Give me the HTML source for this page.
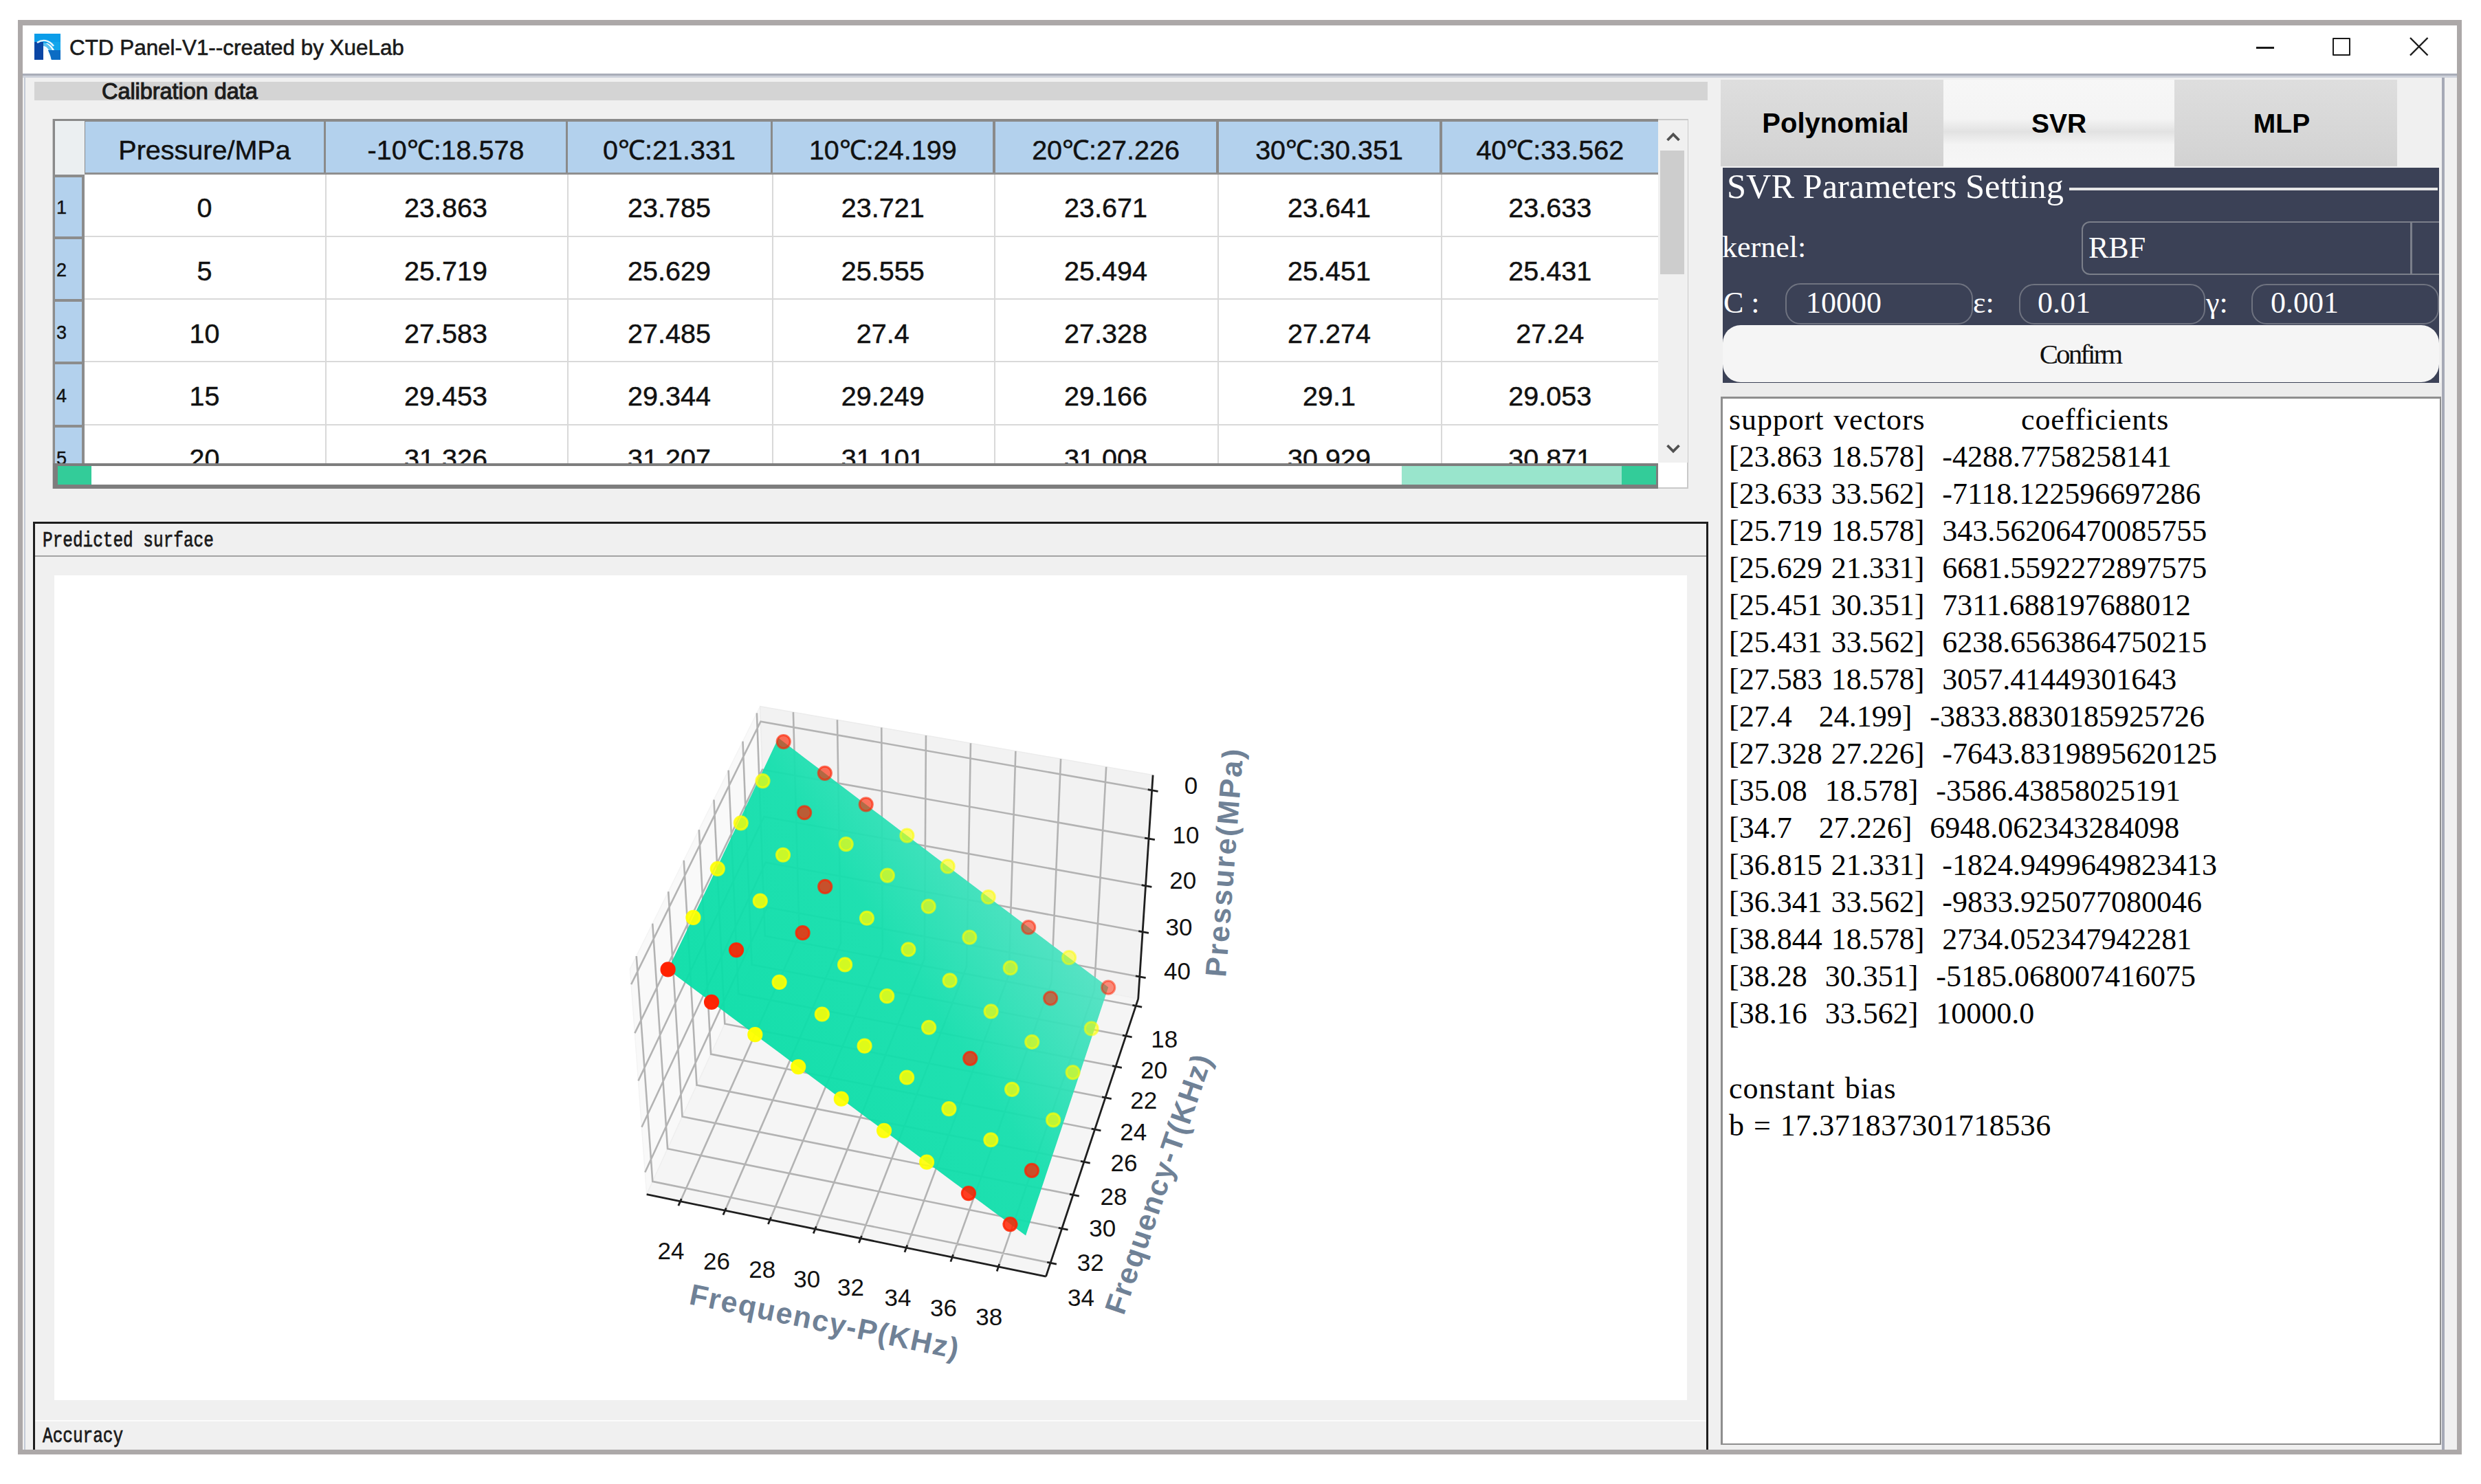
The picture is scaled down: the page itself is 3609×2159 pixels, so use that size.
<!DOCTYPE html><html><head><meta charset="utf-8"><title>CTD Panel</title><style>html,body{margin:0;padding:0;width:3609px;height:2159px;overflow:hidden;background:#fff;position:relative}div{box-sizing:border-box}</style></head><body>
<div style="position:absolute;left:26px;top:29px;width:3555px;height:2087px;background:#aca8a8;border-radius:3px"></div>
<div style="position:absolute;left:33px;top:37px;width:3541px;height:2072px;background:#f0f0f0"></div>
<div style="position:absolute;left:33px;top:37px;width:3541px;height:70px;background:#fff"></div>
<div style="position:absolute;left:33px;top:107px;width:3541px;height:3px;background:#a9adb8"></div>
<div style="position:absolute;left:33px;top:110px;width:3541px;height:3px;background:#cdd1da"></div>
<svg style="position:absolute;left:49px;top:48px" width="40" height="40" viewBox="0 0 40 40"><rect x="1" y="1" width="38" height="14" fill="#0b9de9"/><path d="M14 13 C22 14 27 19 30 25 L39 25 L39 13 Z" fill="#12a6ec"/><rect x="1" y="13" width="13" height="26" fill="#0a46a5"/><path d="M14 14 C19 15 24 18 27 25 L22 25 C20 21 17 19 14 19 Z" fill="#5cc3f0"/><path d="M21 25 L39 25 L39 39 L26 39 C23 35 21.5 31 21 25 Z" fill="#0b6cc4"/><path d="M5 14 C13 9 22 10 29 19" stroke="#e6f5fd" stroke-width="2.6" fill="none"/><path d="M14 22 C18 22 21 26 24 38" stroke="#f4fbff" stroke-width="3" fill="none"/></svg>
<div style="left:101px;position:absolute;top:52.07px;font-family:'Liberation Sans', sans-serif;font-size:31.4px;line-height:1.1171875em;font-weight:400;color:#1a1a1a;white-space:pre;-webkit-text-stroke:0.6px #1a1a1a">CTD Panel-V1--created by XueLab</div>
<div style="position:absolute;left:3282px;top:68px;width:26px;height:2.5px;background:#1a1a1a"></div>
<div style="position:absolute;left:3393px;top:55px;width:26px;height:26px;border:2.6px solid #1a1a1a;border-radius:1px"></div>
<svg style="position:absolute;left:3500px;top:49px" width="38" height="38" viewBox="0 0 38 38"><path d="M6 6 L31.5 31.5 M31.5 6 L6 31.5" stroke="#1a1a1a" stroke-width="2.4"/></svg>
<div style="position:absolute;left:35px;top:113px;width:2px;height:1996px;background:#c3cad6"></div>
<div style="position:absolute;left:50px;top:119px;width:2434px;height:27px;background:#d4d4d4"></div>
<div style="left:148px;position:absolute;top:115.17px;font-family:'Liberation Sans', sans-serif;font-size:32.4px;line-height:1.1171875em;font-weight:400;color:#1c1c1c;white-space:pre;-webkit-text-stroke:1.1px #1c1c1c">Calibration data</div>
<div style="position:absolute;left:76px;top:173px;width:2380px;height:538px;background:#fff;border:2px solid #c9c9c9"></div>
<div style="position:absolute;left:77px;top:173px;width:2335px;height:501px;overflow:hidden">
<div style="position:absolute;left:0;top:0;width:2335px;height:81px;background:#8a8a8a"></div>
<div style="position:absolute;left:3px;top:3px;width:43px;height:78px;background:#ebeff1"></div>
<div style="position:absolute;left:47.0px;top:4px;width:346.5px;height:77px;background:#b3d1ed"></div>
<div style="position:absolute;left:397.0px;top:4px;width:348.5px;height:77px;background:#b3d1ed"></div>
<div style="position:absolute;left:749.0px;top:4px;width:294.5px;height:77px;background:#b3d1ed"></div>
<div style="position:absolute;left:1047.0px;top:4px;width:320.0px;height:77px;background:#b3d1ed"></div>
<div style="position:absolute;left:1370.5px;top:4px;width:321.5px;height:77px;background:#b3d1ed"></div>
<div style="position:absolute;left:1695.5px;top:4px;width:321.5px;height:77px;background:#b3d1ed"></div>
<div style="position:absolute;left:2020.5px;top:4px;width:314.5px;height:77px;background:#b3d1ed"></div>
<div style="position:absolute;left:46px;top:78px;width:2289px;height:3px;background:#8f8f8f"></div>
<div style="position:absolute;left:0;top:81px;width:46px;height:90px;background:#8c8c8c"></div>
<div style="position:absolute;left:3px;top:84.5px;width:39px;height:86.5px;background:#b3d1ed"></div>
<div style="position:absolute;left:46px;top:170px;width:2289px;height:2px;background:#d9d9d9"></div>
<div style="position:absolute;left:0;top:171px;width:46px;height:91px;background:#8c8c8c"></div>
<div style="position:absolute;left:3px;top:174.5px;width:39px;height:87.5px;background:#b3d1ed"></div>
<div style="position:absolute;left:46px;top:261px;width:2289px;height:2px;background:#d9d9d9"></div>
<div style="position:absolute;left:0;top:262px;width:46px;height:91px;background:#8c8c8c"></div>
<div style="position:absolute;left:3px;top:265.5px;width:39px;height:87.5px;background:#b3d1ed"></div>
<div style="position:absolute;left:46px;top:352px;width:2289px;height:2px;background:#d9d9d9"></div>
<div style="position:absolute;left:0;top:353px;width:46px;height:92px;background:#8c8c8c"></div>
<div style="position:absolute;left:3px;top:356.5px;width:39px;height:88.5px;background:#b3d1ed"></div>
<div style="position:absolute;left:46px;top:444px;width:2289px;height:2px;background:#d9d9d9"></div>
<div style="position:absolute;left:0;top:445px;width:46px;height:91px;background:#8c8c8c"></div>
<div style="position:absolute;left:3px;top:448.5px;width:39px;height:87.5px;background:#b3d1ed"></div>
<div style="position:absolute;left:46px;top:535px;width:2289px;height:2px;background:#d9d9d9"></div>
<div style="position:absolute;left:395.5px;top:81px;width:2px;height:420px;background:#d9d9d9"></div>
<div style="position:absolute;left:747.5px;top:81px;width:2px;height:420px;background:#d9d9d9"></div>
<div style="position:absolute;left:1045.5px;top:81px;width:2px;height:420px;background:#d9d9d9"></div>
<div style="position:absolute;left:1369.0px;top:81px;width:2px;height:420px;background:#d9d9d9"></div>
<div style="position:absolute;left:1694.0px;top:81px;width:2px;height:420px;background:#d9d9d9"></div>
<div style="position:absolute;left:2019.0px;top:81px;width:2px;height:420px;background:#d9d9d9"></div>
</div>
<div style="left:97.50px;width:400px;text-align:center;position:absolute;top:196.24px;font-family:'Liberation Sans', sans-serif;font-size:39.5px;line-height:1.1171875em;font-weight:400;color:#111;white-space:pre;-webkit-text-stroke:0.5px #111">Pressure/MPa</div>
<div style="left:448.50px;width:400px;text-align:center;position:absolute;top:196.24px;font-family:'Liberation Sans', sans-serif;font-size:39.5px;line-height:1.1171875em;font-weight:400;color:#111;white-space:pre;-webkit-text-stroke:0.5px #111">-10℃:18.578</div>
<div style="left:773.50px;width:400px;text-align:center;position:absolute;top:196.24px;font-family:'Liberation Sans', sans-serif;font-size:39.5px;line-height:1.1171875em;font-weight:400;color:#111;white-space:pre;-webkit-text-stroke:0.5px #111">0℃:21.331</div>
<div style="left:1084.25px;width:400px;text-align:center;position:absolute;top:196.24px;font-family:'Liberation Sans', sans-serif;font-size:39.5px;line-height:1.1171875em;font-weight:400;color:#111;white-space:pre;-webkit-text-stroke:0.5px #111">10℃:24.199</div>
<div style="left:1408.50px;width:400px;text-align:center;position:absolute;top:196.24px;font-family:'Liberation Sans', sans-serif;font-size:39.5px;line-height:1.1171875em;font-weight:400;color:#111;white-space:pre;-webkit-text-stroke:0.5px #111">20℃:27.226</div>
<div style="left:1733.50px;width:400px;text-align:center;position:absolute;top:196.24px;font-family:'Liberation Sans', sans-serif;font-size:39.5px;line-height:1.1171875em;font-weight:400;color:#111;white-space:pre;-webkit-text-stroke:0.5px #111">30℃:30.351</div>
<div style="left:2054.75px;width:400px;text-align:center;position:absolute;top:196.24px;font-family:'Liberation Sans', sans-serif;font-size:39.5px;line-height:1.1171875em;font-weight:400;color:#111;white-space:pre;-webkit-text-stroke:0.5px #111">40℃:33.562</div>
<div style="position:absolute;left:77px;top:254px;width:2335px;height:420px;overflow:hidden">
<div style="left:20.50px;width:400px;text-align:center;position:absolute;top:26.49px;font-family:'Liberation Sans', sans-serif;font-size:39.5px;line-height:1.1171875em;font-weight:400;color:#111;white-space:pre;-webkit-text-stroke:0.5px #111">0</div>
<div style="left:371.50px;width:400px;text-align:center;position:absolute;top:26.49px;font-family:'Liberation Sans', sans-serif;font-size:39.5px;line-height:1.1171875em;font-weight:400;color:#111;white-space:pre;-webkit-text-stroke:0.5px #111">23.863</div>
<div style="left:696.50px;width:400px;text-align:center;position:absolute;top:26.49px;font-family:'Liberation Sans', sans-serif;font-size:39.5px;line-height:1.1171875em;font-weight:400;color:#111;white-space:pre;-webkit-text-stroke:0.5px #111">23.785</div>
<div style="left:1007.25px;width:400px;text-align:center;position:absolute;top:26.49px;font-family:'Liberation Sans', sans-serif;font-size:39.5px;line-height:1.1171875em;font-weight:400;color:#111;white-space:pre;-webkit-text-stroke:0.5px #111">23.721</div>
<div style="left:1331.50px;width:400px;text-align:center;position:absolute;top:26.49px;font-family:'Liberation Sans', sans-serif;font-size:39.5px;line-height:1.1171875em;font-weight:400;color:#111;white-space:pre;-webkit-text-stroke:0.5px #111">23.671</div>
<div style="left:1656.50px;width:400px;text-align:center;position:absolute;top:26.49px;font-family:'Liberation Sans', sans-serif;font-size:39.5px;line-height:1.1171875em;font-weight:400;color:#111;white-space:pre;-webkit-text-stroke:0.5px #111">23.641</div>
<div style="left:1977.75px;width:400px;text-align:center;position:absolute;top:26.49px;font-family:'Liberation Sans', sans-serif;font-size:39.5px;line-height:1.1171875em;font-weight:400;color:#111;white-space:pre;-webkit-text-stroke:0.5px #111">23.633</div>
<div style="left:5px;position:absolute;top:32.81px;font-family:'Liberation Sans', sans-serif;font-size:27px;line-height:1.1171875em;font-weight:400;color:#111;white-space:pre;-webkit-text-stroke:0.4px #111">1</div>
<div style="left:20.50px;width:400px;text-align:center;position:absolute;top:117.74px;font-family:'Liberation Sans', sans-serif;font-size:39.5px;line-height:1.1171875em;font-weight:400;color:#111;white-space:pre;-webkit-text-stroke:0.5px #111">5</div>
<div style="left:371.50px;width:400px;text-align:center;position:absolute;top:117.74px;font-family:'Liberation Sans', sans-serif;font-size:39.5px;line-height:1.1171875em;font-weight:400;color:#111;white-space:pre;-webkit-text-stroke:0.5px #111">25.719</div>
<div style="left:696.50px;width:400px;text-align:center;position:absolute;top:117.74px;font-family:'Liberation Sans', sans-serif;font-size:39.5px;line-height:1.1171875em;font-weight:400;color:#111;white-space:pre;-webkit-text-stroke:0.5px #111">25.629</div>
<div style="left:1007.25px;width:400px;text-align:center;position:absolute;top:117.74px;font-family:'Liberation Sans', sans-serif;font-size:39.5px;line-height:1.1171875em;font-weight:400;color:#111;white-space:pre;-webkit-text-stroke:0.5px #111">25.555</div>
<div style="left:1331.50px;width:400px;text-align:center;position:absolute;top:117.74px;font-family:'Liberation Sans', sans-serif;font-size:39.5px;line-height:1.1171875em;font-weight:400;color:#111;white-space:pre;-webkit-text-stroke:0.5px #111">25.494</div>
<div style="left:1656.50px;width:400px;text-align:center;position:absolute;top:117.74px;font-family:'Liberation Sans', sans-serif;font-size:39.5px;line-height:1.1171875em;font-weight:400;color:#111;white-space:pre;-webkit-text-stroke:0.5px #111">25.451</div>
<div style="left:1977.75px;width:400px;text-align:center;position:absolute;top:117.74px;font-family:'Liberation Sans', sans-serif;font-size:39.5px;line-height:1.1171875em;font-weight:400;color:#111;white-space:pre;-webkit-text-stroke:0.5px #111">25.431</div>
<div style="left:5px;position:absolute;top:124.06px;font-family:'Liberation Sans', sans-serif;font-size:27px;line-height:1.1171875em;font-weight:400;color:#111;white-space:pre;-webkit-text-stroke:0.4px #111">2</div>
<div style="left:20.50px;width:400px;text-align:center;position:absolute;top:208.99px;font-family:'Liberation Sans', sans-serif;font-size:39.5px;line-height:1.1171875em;font-weight:400;color:#111;white-space:pre;-webkit-text-stroke:0.5px #111">10</div>
<div style="left:371.50px;width:400px;text-align:center;position:absolute;top:208.99px;font-family:'Liberation Sans', sans-serif;font-size:39.5px;line-height:1.1171875em;font-weight:400;color:#111;white-space:pre;-webkit-text-stroke:0.5px #111">27.583</div>
<div style="left:696.50px;width:400px;text-align:center;position:absolute;top:208.99px;font-family:'Liberation Sans', sans-serif;font-size:39.5px;line-height:1.1171875em;font-weight:400;color:#111;white-space:pre;-webkit-text-stroke:0.5px #111">27.485</div>
<div style="left:1007.25px;width:400px;text-align:center;position:absolute;top:208.99px;font-family:'Liberation Sans', sans-serif;font-size:39.5px;line-height:1.1171875em;font-weight:400;color:#111;white-space:pre;-webkit-text-stroke:0.5px #111">27.4</div>
<div style="left:1331.50px;width:400px;text-align:center;position:absolute;top:208.99px;font-family:'Liberation Sans', sans-serif;font-size:39.5px;line-height:1.1171875em;font-weight:400;color:#111;white-space:pre;-webkit-text-stroke:0.5px #111">27.328</div>
<div style="left:1656.50px;width:400px;text-align:center;position:absolute;top:208.99px;font-family:'Liberation Sans', sans-serif;font-size:39.5px;line-height:1.1171875em;font-weight:400;color:#111;white-space:pre;-webkit-text-stroke:0.5px #111">27.274</div>
<div style="left:1977.75px;width:400px;text-align:center;position:absolute;top:208.99px;font-family:'Liberation Sans', sans-serif;font-size:39.5px;line-height:1.1171875em;font-weight:400;color:#111;white-space:pre;-webkit-text-stroke:0.5px #111">27.24</div>
<div style="left:5px;position:absolute;top:215.31px;font-family:'Liberation Sans', sans-serif;font-size:27px;line-height:1.1171875em;font-weight:400;color:#111;white-space:pre;-webkit-text-stroke:0.4px #111">3</div>
<div style="left:20.50px;width:400px;text-align:center;position:absolute;top:300.24px;font-family:'Liberation Sans', sans-serif;font-size:39.5px;line-height:1.1171875em;font-weight:400;color:#111;white-space:pre;-webkit-text-stroke:0.5px #111">15</div>
<div style="left:371.50px;width:400px;text-align:center;position:absolute;top:300.24px;font-family:'Liberation Sans', sans-serif;font-size:39.5px;line-height:1.1171875em;font-weight:400;color:#111;white-space:pre;-webkit-text-stroke:0.5px #111">29.453</div>
<div style="left:696.50px;width:400px;text-align:center;position:absolute;top:300.24px;font-family:'Liberation Sans', sans-serif;font-size:39.5px;line-height:1.1171875em;font-weight:400;color:#111;white-space:pre;-webkit-text-stroke:0.5px #111">29.344</div>
<div style="left:1007.25px;width:400px;text-align:center;position:absolute;top:300.24px;font-family:'Liberation Sans', sans-serif;font-size:39.5px;line-height:1.1171875em;font-weight:400;color:#111;white-space:pre;-webkit-text-stroke:0.5px #111">29.249</div>
<div style="left:1331.50px;width:400px;text-align:center;position:absolute;top:300.24px;font-family:'Liberation Sans', sans-serif;font-size:39.5px;line-height:1.1171875em;font-weight:400;color:#111;white-space:pre;-webkit-text-stroke:0.5px #111">29.166</div>
<div style="left:1656.50px;width:400px;text-align:center;position:absolute;top:300.24px;font-family:'Liberation Sans', sans-serif;font-size:39.5px;line-height:1.1171875em;font-weight:400;color:#111;white-space:pre;-webkit-text-stroke:0.5px #111">29.1</div>
<div style="left:1977.75px;width:400px;text-align:center;position:absolute;top:300.24px;font-family:'Liberation Sans', sans-serif;font-size:39.5px;line-height:1.1171875em;font-weight:400;color:#111;white-space:pre;-webkit-text-stroke:0.5px #111">29.053</div>
<div style="left:5px;position:absolute;top:306.56px;font-family:'Liberation Sans', sans-serif;font-size:27px;line-height:1.1171875em;font-weight:400;color:#111;white-space:pre;-webkit-text-stroke:0.4px #111">4</div>
<div style="left:20.50px;width:400px;text-align:center;position:absolute;top:391.49px;font-family:'Liberation Sans', sans-serif;font-size:39.5px;line-height:1.1171875em;font-weight:400;color:#111;white-space:pre;-webkit-text-stroke:0.5px #111">20</div>
<div style="left:371.50px;width:400px;text-align:center;position:absolute;top:391.49px;font-family:'Liberation Sans', sans-serif;font-size:39.5px;line-height:1.1171875em;font-weight:400;color:#111;white-space:pre;-webkit-text-stroke:0.5px #111">31.326</div>
<div style="left:696.50px;width:400px;text-align:center;position:absolute;top:391.49px;font-family:'Liberation Sans', sans-serif;font-size:39.5px;line-height:1.1171875em;font-weight:400;color:#111;white-space:pre;-webkit-text-stroke:0.5px #111">31.207</div>
<div style="left:1007.25px;width:400px;text-align:center;position:absolute;top:391.49px;font-family:'Liberation Sans', sans-serif;font-size:39.5px;line-height:1.1171875em;font-weight:400;color:#111;white-space:pre;-webkit-text-stroke:0.5px #111">31.101</div>
<div style="left:1331.50px;width:400px;text-align:center;position:absolute;top:391.49px;font-family:'Liberation Sans', sans-serif;font-size:39.5px;line-height:1.1171875em;font-weight:400;color:#111;white-space:pre;-webkit-text-stroke:0.5px #111">31.008</div>
<div style="left:1656.50px;width:400px;text-align:center;position:absolute;top:391.49px;font-family:'Liberation Sans', sans-serif;font-size:39.5px;line-height:1.1171875em;font-weight:400;color:#111;white-space:pre;-webkit-text-stroke:0.5px #111">30.929</div>
<div style="left:1977.75px;width:400px;text-align:center;position:absolute;top:391.49px;font-family:'Liberation Sans', sans-serif;font-size:39.5px;line-height:1.1171875em;font-weight:400;color:#111;white-space:pre;-webkit-text-stroke:0.5px #111">30.871</div>
<div style="left:5px;position:absolute;top:397.81px;font-family:'Liberation Sans', sans-serif;font-size:27px;line-height:1.1171875em;font-weight:400;color:#111;white-space:pre;-webkit-text-stroke:0.4px #111">5</div>
</div>
<div style="position:absolute;left:77px;top:674px;width:2335px;height:37px;background:#7d7d7d"></div>
<div style="position:absolute;left:84px;top:678px;width:2325px;height:27px;background:#fff"></div>
<div style="position:absolute;left:84px;top:678px;width:49px;height:27px;background:#33cc99"></div>
<div style="position:absolute;left:2039px;top:678px;width:320px;height:27px;background:#99e5cc"></div>
<div style="position:absolute;left:2359px;top:678px;width:50px;height:27px;background:#33cc99"></div>
<div style="position:absolute;left:2412px;top:175px;width:43px;height:498px;background:#f0f0f0"></div>
<div style="position:absolute;left:2415px;top:219px;width:35px;height:180px;background:#cdcdcd"></div>
<svg style="position:absolute;left:2422px;top:190px" width="24" height="20" viewBox="0 0 24 20"><path d="M3.5 14 L12 5.5 L20.5 14" stroke="#505050" stroke-width="3.8" fill="none"/></svg>
<svg style="position:absolute;left:2422px;top:643px" width="24" height="20" viewBox="0 0 24 20"><path d="M3.5 5 L12 13.5 L20.5 5" stroke="#505050" stroke-width="3.8" fill="none"/></svg>
<div style="position:absolute;left:48px;top:759px;width:2437px;height:1354px;border:3px solid #1e1e1e;background:#f0f0f0"></div>
<div style="left:62px;position:absolute;top:775.69px;font-family:'Liberation Mono', monospace;font-size:24.4px;line-height:1.1328125em;font-weight:400;color:#1a1a1a;white-space:pre;transform:scaleY(1.25);transform-origin:0 80%;-webkit-text-stroke:0.6px #1a1a1a">Predicted surface</div>
<div style="position:absolute;left:51px;top:808px;width:2431px;height:2px;background:#a3a3a3"></div>
<div style="position:absolute;left:79px;top:837px;width:2375px;height:1200px;background:#fff"></div>
<div style="position:absolute;left:51px;top:2066px;width:2431px;height:2px;background:#fbfbfb"></div>
<div style="left:62px;position:absolute;top:2078.69px;font-family:'Liberation Mono', monospace;font-size:24.4px;line-height:1.1328125em;font-weight:400;color:#1a1a1a;white-space:pre;transform:scaleY(1.25);transform-origin:0 80%;-webkit-text-stroke:0.6px #1a1a1a">Accuracy</div>
<svg style="position:absolute;left:0;top:0" width="3609" height="2159" viewBox="0 0 3609 2159">
<defs><clipPath id="pc"><rect x="79" y="837" width="2375" height="1200"/></clipPath><linearGradient id="sg" gradientUnits="userSpaceOnUse" x1="1150" y1="1600" x2="1560" y2="1330"><stop offset="0" stop-color="#0adea8"/><stop offset="0.5" stop-color="#14dfad"/><stop offset="1" stop-color="#55e2c4"/></linearGradient></defs>
<g clip-path="url(#pc)">
<path d="M1117.24 1351.86 L940.68 1737.69 L916.49 1409.69 L1105.70 1027.73 Z" fill="#f9f9f9" stroke="#f4f4f4" stroke-width="1.5"/>
<path d="M1117.24 1351.86 L1655.71 1453.12 L1677.12 1127.60 L1105.70 1027.73 Z" fill="#f2f2f2" stroke="#ececec" stroke-width="1.5"/>
<path d="M1117.24 1351.86 L1655.71 1453.12 L1521.54 1857.04 L940.68 1737.69 Z" fill="#f5f5f5" stroke="#efefef" stroke-width="1.5"/>
<path d="M989.66 1747.76 L1162.73 1360.41 L1153.91 1036.15 M1054.70 1761.12 L1223.11 1371.77 L1217.92 1047.34 M1120.10 1774.55 L1283.78 1383.18 L1282.26 1058.59 M1185.84 1788.06 L1344.76 1394.64 L1346.95 1069.89 M1251.95 1801.65 L1406.05 1406.17 L1411.98 1081.26 M1318.41 1815.30 L1467.64 1417.75 L1477.36 1092.69 M1385.24 1829.03 L1529.54 1429.39 L1543.09 1104.17 M1452.43 1842.84 L1591.76 1441.09 L1609.17 1115.72 M1100.90 1037.42 L1112.74 1361.70 L1652.30 1463.41 M1080.49 1078.62 L1093.62 1403.49 L1637.79 1507.08 M1059.69 1120.62 L1074.14 1446.05 L1623.01 1551.59 M1038.47 1163.45 L1054.30 1489.41 L1607.94 1596.94 M1016.83 1207.14 L1034.09 1533.58 L1592.59 1643.17 M994.75 1251.71 L1013.49 1578.58 L1576.93 1690.29 M972.22 1297.18 L992.50 1624.45 L1560.97 1738.34 M949.23 1343.60 L971.10 1671.21 L1544.70 1787.33 M925.76 1390.98 L949.29 1718.88 L1528.09 1837.31 M1675.66 1149.75 L1106.48 1049.76 L918.14 1432.09 M1671.03 1220.13 L1108.98 1119.78 L923.39 1503.18 M1666.52 1288.76 L1111.41 1188.10 L928.49 1572.39 M1662.12 1355.70 L1113.78 1254.77 L933.46 1639.79 M1657.82 1421.02 L1116.10 1319.85 L938.30 1705.45" fill="none" stroke="#b3b3b3" stroke-width="2.6" stroke-linejoin="miter"/>
<path d="M940.68 1737.69 L1521.54 1857.04 M1521.54 1857.04 L1655.71 1453.12 M1655.71 1453.12 L1677.12 1127.60 M986.81 1754.15 L991.29 1744.10 M1051.93 1767.54 L1056.29 1757.45 M1117.40 1781.01 L1121.64 1770.86 M1183.22 1794.55 L1187.34 1784.35 M1249.41 1808.17 L1253.40 1797.92 M1315.95 1821.86 L1319.82 1811.56 M1382.86 1835.62 L1386.60 1825.27 M1450.14 1849.45 L1453.75 1839.06 M1661.14 1465.07 L1647.38 1462.48 M1646.63 1508.77 L1632.88 1506.15 M1631.84 1553.29 L1618.10 1550.65 M1616.78 1598.66 L1603.03 1595.99 M1601.42 1644.90 L1587.68 1642.20 M1585.76 1692.04 L1572.03 1689.32 M1569.80 1740.10 L1556.07 1737.35 M1553.52 1789.12 L1539.80 1786.34 M1536.91 1839.12 L1523.20 1836.31 M1684.52 1151.31 L1669.75 1148.71 M1679.89 1221.72 L1665.13 1219.08 M1675.38 1290.37 L1660.62 1287.69 M1670.97 1357.33 L1656.22 1354.62 M1666.67 1422.67 L1651.93 1419.92" fill="none" stroke="#1f1f1f" stroke-width="2.8"/>
<text x="976" y="1831.60" text-anchor="middle" font-family="Liberation Sans" font-size="35" fill="#111">24</text>
<text x="1042.5" y="1846.60" text-anchor="middle" font-family="Liberation Sans" font-size="35" fill="#111">26</text>
<text x="1108.75" y="1858.60" text-anchor="middle" font-family="Liberation Sans" font-size="35" fill="#111">28</text>
<text x="1173.75" y="1872.60" text-anchor="middle" font-family="Liberation Sans" font-size="35" fill="#111">30</text>
<text x="1237.5" y="1885.10" text-anchor="middle" font-family="Liberation Sans" font-size="35" fill="#111">32</text>
<text x="1306" y="1900.10" text-anchor="middle" font-family="Liberation Sans" font-size="35" fill="#111">34</text>
<text x="1372.5" y="1915.10" text-anchor="middle" font-family="Liberation Sans" font-size="35" fill="#111">36</text>
<text x="1438.75" y="1927.60" text-anchor="middle" font-family="Liberation Sans" font-size="35" fill="#111">38</text>
<text x="1693.75" y="1523.60" text-anchor="middle" font-family="Liberation Sans" font-size="35" fill="#111">18</text>
<text x="1678.75" y="1568.60" text-anchor="middle" font-family="Liberation Sans" font-size="35" fill="#111">20</text>
<text x="1663.75" y="1612.60" text-anchor="middle" font-family="Liberation Sans" font-size="35" fill="#111">22</text>
<text x="1648.75" y="1658.60" text-anchor="middle" font-family="Liberation Sans" font-size="35" fill="#111">24</text>
<text x="1635" y="1703.60" text-anchor="middle" font-family="Liberation Sans" font-size="35" fill="#111">26</text>
<text x="1620" y="1752.60" text-anchor="middle" font-family="Liberation Sans" font-size="35" fill="#111">28</text>
<text x="1603.75" y="1798.60" text-anchor="middle" font-family="Liberation Sans" font-size="35" fill="#111">30</text>
<text x="1586.25" y="1848.60" text-anchor="middle" font-family="Liberation Sans" font-size="35" fill="#111">32</text>
<text x="1572.5" y="1900.10" text-anchor="middle" font-family="Liberation Sans" font-size="35" fill="#111">34</text>
<text x="1732.5" y="1155.10" text-anchor="middle" font-family="Liberation Sans" font-size="35" fill="#111">0</text>
<text x="1725" y="1226.60" text-anchor="middle" font-family="Liberation Sans" font-size="35" fill="#111">10</text>
<text x="1720.75" y="1292.60" text-anchor="middle" font-family="Liberation Sans" font-size="35" fill="#111">20</text>
<text x="1715" y="1361.35" text-anchor="middle" font-family="Liberation Sans" font-size="35" fill="#111">30</text>
<text x="1712.5" y="1425.10" text-anchor="middle" font-family="Liberation Sans" font-size="35" fill="#111">40</text>
<text transform="translate(1200 1922.5) rotate(11.6)" x="0" y="15" text-anchor="middle" font-family="Liberation Sans" font-weight="700" font-size="43" letter-spacing="1.7" fill="#6f8196">Frequency-P(KHz)</text>
<text transform="translate(1685 1722) rotate(-71)" x="0" y="15" text-anchor="middle" font-family="Liberation Sans" font-weight="700" font-size="43" letter-spacing="1.7" fill="#6f8196">Frequency-T(KHz)</text>
<text transform="translate(1781 1254) rotate(-85.6)" x="0" y="15" text-anchor="middle" font-family="Liberation Sans" font-weight="700" font-size="43" letter-spacing="2.6" fill="#6f8196">Pressure(MPa)</text>
<path d="M1132.27 1073.52 L1144.95 1083.18 L1157.61 1092.81 L1170.24 1102.43 L1182.86 1112.03 L1195.46 1121.60 L1208.04 1131.16 L1220.59 1140.70 L1233.13 1150.22 L1245.65 1159.72 L1258.15 1169.21 L1270.62 1178.67 L1283.08 1188.11 L1295.52 1197.54 L1307.94 1206.95 L1320.34 1216.34 L1332.71 1225.71 L1345.07 1235.06 L1357.41 1244.39 L1369.74 1253.70 L1382.04 1263.00 L1394.32 1272.28 L1406.58 1281.54 L1418.83 1290.78 L1431.06 1300.00 L1443.26 1309.21 L1455.45 1318.40 L1467.62 1327.57 L1479.77 1336.72 L1491.90 1345.85 L1504.02 1354.97 L1516.11 1364.07 L1528.19 1373.15 L1540.25 1382.21 L1552.29 1391.26 L1564.31 1400.29 L1576.31 1409.30 L1588.30 1418.30 L1600.27 1427.27 L1612.22 1436.23 L1609.34 1444.97 L1606.45 1453.72 L1603.55 1462.51 L1600.64 1471.32 L1597.71 1480.16 L1594.78 1489.02 L1591.84 1497.91 L1588.89 1506.83 L1585.93 1515.77 L1582.96 1524.74 L1579.98 1533.74 L1576.99 1542.76 L1573.99 1551.81 L1570.98 1560.89 L1567.96 1570.00 L1564.93 1579.14 L1561.88 1588.30 L1558.83 1597.49 L1555.76 1606.71 L1552.69 1615.96 L1549.60 1625.24 L1546.50 1634.55 L1543.40 1643.88 L1540.28 1653.25 L1537.15 1662.65 L1534.01 1672.07 L1530.85 1681.53 L1527.69 1691.01 L1524.51 1700.53 L1521.33 1710.07 L1518.13 1719.65 L1514.92 1729.26 L1511.70 1738.90 L1508.46 1748.57 L1505.22 1758.27 L1501.96 1768.01 L1498.69 1777.77 L1495.41 1787.57 L1492.11 1797.40 L1479.21 1787.88 L1466.28 1778.33 L1453.32 1768.77 L1440.35 1759.19 L1427.35 1749.58 L1414.34 1739.96 L1401.29 1730.32 L1388.23 1720.65 L1375.15 1710.97 L1362.04 1701.27 L1348.91 1691.54 L1335.75 1681.79 L1322.57 1672.03 L1309.37 1662.24 L1296.15 1652.43 L1282.90 1642.60 L1269.64 1632.75 L1256.34 1622.88 L1243.03 1612.99 L1229.69 1603.08 L1216.32 1593.14 L1202.94 1583.18 L1189.52 1573.21 L1176.09 1563.21 L1162.63 1553.19 L1149.15 1543.14 L1135.64 1533.08 L1122.11 1522.99 L1108.55 1512.89 L1094.97 1502.76 L1081.37 1492.60 L1067.74 1482.43 L1054.09 1472.23 L1040.41 1462.01 L1026.70 1451.77 L1012.97 1441.51 L999.22 1431.22 L985.44 1420.91 L971.63 1410.58 L976.07 1401.38 L980.48 1392.22 L984.88 1383.09 L989.26 1373.99 L993.62 1364.92 L997.96 1355.88 L1002.29 1346.87 L1006.60 1337.89 L1010.89 1328.94 L1015.17 1320.03 L1019.43 1311.14 L1023.67 1302.28 L1027.89 1293.45 L1032.10 1284.65 L1036.30 1275.87 L1040.47 1267.13 L1044.63 1258.41 L1048.78 1249.73 L1052.90 1241.07 L1057.02 1232.44 L1061.11 1223.83 L1065.19 1215.26 L1069.26 1206.71 L1073.31 1198.19 L1077.34 1189.70 L1081.36 1181.23 L1085.37 1172.79 L1089.36 1164.37 L1093.33 1155.99 L1097.29 1147.62 L1101.23 1139.29 L1105.16 1130.98 L1109.08 1122.70 L1112.98 1114.44 L1116.87 1106.20 L1120.74 1098.00 L1124.60 1089.81 L1128.44 1081.65 L1132.27 1073.52 Z" fill="url(#sg)" fill-opacity="0.95"/>
<circle cx="1612.19" cy="1436.69" r="9.6" fill="#ff2200" fill-opacity="0.500" stroke="#ff2200" stroke-width="3" stroke-opacity="0.500"/>
<circle cx="1555.09" cy="1393.22" r="9.6" fill="#ffff00" fill-opacity="0.522" stroke="#ffff00" stroke-width="3" stroke-opacity="0.522"/>
<circle cx="1496.13" cy="1349.17" r="9.6" fill="#ff2200" fill-opacity="0.542" stroke="#ff2200" stroke-width="3" stroke-opacity="0.542"/>
<circle cx="1437.73" cy="1304.98" r="9.6" fill="#ffff00" fill-opacity="0.562" stroke="#ffff00" stroke-width="3" stroke-opacity="0.562"/>
<circle cx="1587.67" cy="1496.40" r="9.6" fill="#ffff00" fill-opacity="0.565" stroke="#ffff00" stroke-width="3" stroke-opacity="0.565"/>
<circle cx="1378.65" cy="1260.40" r="9.6" fill="#ffff00" fill-opacity="0.581" stroke="#ffff00" stroke-width="3" stroke-opacity="0.581"/>
<circle cx="1528.13" cy="1452.29" r="9.6" fill="#ff2200" fill-opacity="0.587" stroke="#ff2200" stroke-width="3" stroke-opacity="0.587"/>
<circle cx="1319.37" cy="1215.54" r="9.6" fill="#ffff00" fill-opacity="0.598" stroke="#ffff00" stroke-width="3" stroke-opacity="0.598"/>
<circle cx="1469.72" cy="1408.16" r="9.6" fill="#ffff00" fill-opacity="0.608" stroke="#ffff00" stroke-width="3" stroke-opacity="0.608"/>
<circle cx="1259.74" cy="1170.35" r="9.6" fill="#ff2200" fill-opacity="0.614" stroke="#ff2200" stroke-width="3" stroke-opacity="0.614"/>
<circle cx="1410.36" cy="1363.60" r="9.6" fill="#ffff00" fill-opacity="0.628" stroke="#ffff00" stroke-width="3" stroke-opacity="0.628"/>
<circle cx="1199.84" cy="1124.86" r="9.6" fill="#ff2200" fill-opacity="0.630" stroke="#ff2200" stroke-width="3" stroke-opacity="0.630"/>
<circle cx="1560.61" cy="1560.09" r="9.6" fill="#ffff00" fill-opacity="0.632" stroke="#ffff00" stroke-width="3" stroke-opacity="0.632"/>
<circle cx="1139.74" cy="1079.06" r="9.6" fill="#ff2200" fill-opacity="0.644" stroke="#ff2200" stroke-width="3" stroke-opacity="0.644"/>
<circle cx="1350.71" cy="1318.72" r="9.6" fill="#ffff00" fill-opacity="0.647" stroke="#ffff00" stroke-width="3" stroke-opacity="0.647"/>
<circle cx="1501.22" cy="1515.84" r="9.6" fill="#ffff00" fill-opacity="0.654" stroke="#ffff00" stroke-width="3" stroke-opacity="0.654"/>
<circle cx="1290.87" cy="1273.55" r="9.6" fill="#ffff00" fill-opacity="0.664" stroke="#ffff00" stroke-width="3" stroke-opacity="0.664"/>
<circle cx="1441.57" cy="1471.28" r="9.6" fill="#ffff00" fill-opacity="0.676" stroke="#ffff00" stroke-width="3" stroke-opacity="0.676"/>
<circle cx="1230.70" cy="1228.06" r="9.6" fill="#ffff00" fill-opacity="0.681" stroke="#ffff00" stroke-width="3" stroke-opacity="0.681"/>
<circle cx="1381.64" cy="1426.41" r="9.6" fill="#ffff00" fill-opacity="0.696" stroke="#ffff00" stroke-width="3" stroke-opacity="0.696"/>
<circle cx="1170.16" cy="1182.23" r="9.6" fill="#ff2200" fill-opacity="0.696" stroke="#ff2200" stroke-width="3" stroke-opacity="0.696"/>
<circle cx="1532.11" cy="1629.39" r="9.6" fill="#ffff00" fill-opacity="0.702" stroke="#ffff00" stroke-width="3" stroke-opacity="0.702"/>
<circle cx="1109.53" cy="1136.11" r="9.6" fill="#ffff00" fill-opacity="0.711" stroke="#ffff00" stroke-width="3" stroke-opacity="0.711"/>
<circle cx="1321.41" cy="1381.23" r="9.6" fill="#ffff00" fill-opacity="0.715" stroke="#ffff00" stroke-width="3" stroke-opacity="0.715"/>
<circle cx="1472.05" cy="1584.81" r="9.6" fill="#ffff00" fill-opacity="0.724" stroke="#ffff00" stroke-width="3" stroke-opacity="0.724"/>
<circle cx="1260.98" cy="1335.74" r="9.6" fill="#ffff00" fill-opacity="0.733" stroke="#ffff00" stroke-width="3" stroke-opacity="0.733"/>
<circle cx="1411.27" cy="1539.84" r="9.6" fill="#ff2200" fill-opacity="0.746" stroke="#ff2200" stroke-width="3" stroke-opacity="0.746"/>
<circle cx="1200.18" cy="1289.92" r="9.6" fill="#ff2200" fill-opacity="0.750" stroke="#ff2200" stroke-width="3" stroke-opacity="0.750"/>
<circle cx="1139.03" cy="1243.76" r="9.6" fill="#ffff00" fill-opacity="0.765" stroke="#ffff00" stroke-width="3" stroke-opacity="0.765"/>
<circle cx="1351.12" cy="1494.73" r="9.6" fill="#ffff00" fill-opacity="0.766" stroke="#ffff00" stroke-width="3" stroke-opacity="0.766"/>
<circle cx="1500.91" cy="1702.89" r="9.6" fill="#ff2200" fill-opacity="0.772" stroke="#ff2200" stroke-width="3" stroke-opacity="0.772"/>
<circle cx="1077.76" cy="1197.29" r="9.6" fill="#ffff00" fill-opacity="0.780" stroke="#ffff00" stroke-width="3" stroke-opacity="0.780"/>
<circle cx="1290.21" cy="1449.21" r="9.6" fill="#ffff00" fill-opacity="0.786" stroke="#ffff00" stroke-width="3" stroke-opacity="0.786"/>
<circle cx="1441.36" cy="1658.24" r="9.6" fill="#ffff00" fill-opacity="0.795" stroke="#ffff00" stroke-width="3" stroke-opacity="0.795"/>
<circle cx="1229.09" cy="1403.39" r="9.6" fill="#ffff00" fill-opacity="0.804" stroke="#ffff00" stroke-width="3" stroke-opacity="0.804"/>
<circle cx="1380.40" cy="1613.04" r="9.6" fill="#ffff00" fill-opacity="0.817" stroke="#ffff00" stroke-width="3" stroke-opacity="0.817"/>
<circle cx="1167.62" cy="1357.21" r="9.6" fill="#ff2200" fill-opacity="0.821" stroke="#ff2200" stroke-width="3" stroke-opacity="0.821"/>
<circle cx="1105.79" cy="1310.70" r="9.6" fill="#ffff00" fill-opacity="0.837" stroke="#ffff00" stroke-width="3" stroke-opacity="0.837"/>
<circle cx="1319.16" cy="1567.52" r="9.6" fill="#ffff00" fill-opacity="0.838" stroke="#ffff00" stroke-width="3" stroke-opacity="0.838"/>
<circle cx="1469.45" cy="1781.11" r="9.6" fill="#ff2200" fill-opacity="0.844" stroke="#ff2200" stroke-width="3" stroke-opacity="0.844"/>
<circle cx="1043.82" cy="1263.87" r="9.6" fill="#ffff00" fill-opacity="0.852" stroke="#ffff00" stroke-width="3" stroke-opacity="0.852"/>
<circle cx="1257.59" cy="1521.66" r="9.6" fill="#ffff00" fill-opacity="0.858" stroke="#ffff00" stroke-width="3" stroke-opacity="0.858"/>
<circle cx="1408.89" cy="1736.07" r="9.6" fill="#ff2200" fill-opacity="0.867" stroke="#ff2200" stroke-width="3" stroke-opacity="0.867"/>
<circle cx="1195.82" cy="1475.49" r="9.6" fill="#ffff00" fill-opacity="0.876" stroke="#ffff00" stroke-width="3" stroke-opacity="0.876"/>
<circle cx="1348.07" cy="1690.71" r="9.6" fill="#ffff00" fill-opacity="0.890" stroke="#ffff00" stroke-width="3" stroke-opacity="0.890"/>
<circle cx="1133.65" cy="1428.97" r="9.6" fill="#ffff00" fill-opacity="0.894" stroke="#ffff00" stroke-width="3" stroke-opacity="0.894"/>
<circle cx="1071.07" cy="1382.08" r="9.6" fill="#ff2200" fill-opacity="0.910" stroke="#ff2200" stroke-width="3" stroke-opacity="0.910"/>
<circle cx="1286.08" cy="1644.85" r="9.6" fill="#ffff00" fill-opacity="0.911" stroke="#ffff00" stroke-width="3" stroke-opacity="0.911"/>
<circle cx="1008.41" cy="1334.89" r="9.6" fill="#ffff00" fill-opacity="0.926" stroke="#ffff00" stroke-width="3" stroke-opacity="0.926"/>
<circle cx="1223.78" cy="1598.64" r="9.6" fill="#ffff00" fill-opacity="0.931" stroke="#ffff00" stroke-width="3" stroke-opacity="0.931"/>
<circle cx="1161.24" cy="1552.11" r="9.6" fill="#ffff00" fill-opacity="0.950" stroke="#ffff00" stroke-width="3" stroke-opacity="0.950"/>
<circle cx="1098.34" cy="1505.22" r="9.6" fill="#ffff00" fill-opacity="0.968" stroke="#ffff00" stroke-width="3" stroke-opacity="0.968"/>
<circle cx="1035.06" cy="1457.97" r="9.6" fill="#ff2200" fill-opacity="0.984" stroke="#ff2200" stroke-width="3" stroke-opacity="0.984"/>
<circle cx="971.62" cy="1410.40" r="9.6" fill="#ff2200" fill-opacity="1.000" stroke="#ff2200" stroke-width="3" stroke-opacity="1.000"/>
</g></svg>
<div style="position:absolute;left:3552px;top:113px;width:4px;height:1996px;background:#a6a9b6"></div>
<div style="position:absolute;left:2503px;top:116px;width:324px;height:126px;background:linear-gradient(#dedede,#d2d2d2)"></div>
<div style="position:absolute;left:2827px;top:116px;width:336px;height:126px;background:linear-gradient(#f7f7f7 0%,#f4f4f4 45%,#e2e2e2 60%,#f4f4f4 75%,#f6f6f6 100%)"></div>
<div style="position:absolute;left:3163px;top:116px;width:324px;height:126px;background:linear-gradient(#dedede,#d2d2d2)"></div>
<div style="left:2470.00px;width:400px;text-align:center;position:absolute;top:156.79px;font-family:'Liberation Sans', sans-serif;font-size:40px;line-height:1.1171875em;font-weight:700;color:#000;white-space:pre;">Polynomial</div>
<div style="left:2795.00px;width:400px;text-align:center;position:absolute;top:157.69px;font-family:'Liberation Sans', sans-serif;font-size:39px;line-height:1.1171875em;font-weight:700;color:#000;white-space:pre;">SVR</div>
<div style="left:3119.00px;width:400px;text-align:center;position:absolute;top:157.69px;font-family:'Liberation Sans', sans-serif;font-size:39px;line-height:1.1171875em;font-weight:700;color:#000;white-space:pre;">MLP</div>
<div style="position:absolute;left:0;top:0;width:3548px;height:2159px;overflow:hidden">
<div style="position:absolute;left:2506px;top:244px;width:1042px;height:313px;background:#3b4156"></div>
<div style="left:2512px;position:absolute;top:244.09px;font-family:'Liberation Serif', serif;font-size:50.4px;line-height:1.107421875em;font-weight:400;color:#fff;white-space:pre;">SVR Parameters Setting</div>
<div style="position:absolute;left:3010px;top:273px;width:536px;height:3.5px;background:#e6e6e6"></div>
<div style="left:2505px;position:absolute;top:335.79px;font-family:'Liberation Serif', serif;font-size:44px;line-height:1.107421875em;font-weight:400;color:#fff;white-space:pre;">kernel:</div>
<div style="position:absolute;left:3028px;top:322px;width:532px;height:78px;border:2.5px solid #7b7f8a;border-radius:12px"></div>
<div style="position:absolute;left:3506px;top:323px;width:2.5px;height:76px;background:#7b7f8a"></div>
<div style="left:3038px;position:absolute;top:336.79px;font-family:'Liberation Serif', serif;font-size:44px;line-height:1.107421875em;font-weight:400;color:#fff;white-space:pre;">RBF</div>
<div style="left:2507px;position:absolute;top:416.79px;font-family:'Liberation Serif', serif;font-size:44px;line-height:1.107421875em;font-weight:400;color:#fff;white-space:pre;">C :</div>
<div style="position:absolute;left:2597px;top:412px;width:273px;height:60px;border:2.5px solid #6f7380;border-radius:22px"></div>
<div style="left:2627px;position:absolute;top:416.79px;font-family:'Liberation Serif', serif;font-size:44px;line-height:1.107421875em;font-weight:400;color:#fff;white-space:pre;">10000</div>
<div style="left:2870px;position:absolute;top:416.79px;font-family:'Liberation Serif', serif;font-size:44px;line-height:1.107421875em;font-weight:400;color:#fff;white-space:pre;">ε:</div>
<div style="position:absolute;left:2937px;top:413px;width:271px;height:59px;border:2.5px solid #6f7380;border-radius:22px"></div>
<div style="left:2964px;position:absolute;top:416.79px;font-family:'Liberation Serif', serif;font-size:44px;line-height:1.107421875em;font-weight:400;color:#fff;white-space:pre;">0.01</div>
<div style="left:3209px;position:absolute;top:416.79px;font-family:'Liberation Serif', serif;font-size:44px;line-height:1.107421875em;font-weight:400;color:#fff;white-space:pre;">γ:</div>
<div style="position:absolute;left:3275px;top:413px;width:273px;height:59px;border:2.5px solid #6f7380;border-radius:22px"></div>
<div style="left:3303px;position:absolute;top:416.79px;font-family:'Liberation Serif', serif;font-size:44px;line-height:1.107421875em;font-weight:400;color:#fff;white-space:pre;">0.001</div>
</div>
<div style="position:absolute;left:2506px;top:473px;width:1042px;height:83px;background:#f5f5f5;border-radius:26px"></div>
<div style="left:2826.00px;width:400px;text-align:center;position:absolute;top:493.46px;font-family:'Liberation Serif', serif;font-size:41px;line-height:1.107421875em;font-weight:400;color:#111;white-space:pre;letter-spacing:-2.9px">Confirm</div>
<div style="position:absolute;left:2503px;top:557px;width:1048px;height:20px;background:#ececec"></div>
<div style="position:absolute;left:2503px;top:577px;width:1048px;height:1525px;background:#fff;border:3px solid #8e8e8e;border-right-width:2.5px;border-bottom-width:2.5px"></div>
<div style="left:2515px;position:absolute;top:586.79px;font-family:'Liberation Serif', serif;font-size:44px;line-height:1.107421875em;font-weight:400;color:#000;white-space:pre;letter-spacing:0.9px;word-spacing:2px">support vectors</div>
<div style="left:2940px;position:absolute;top:586.79px;font-family:'Liberation Serif', serif;font-size:44px;line-height:1.107421875em;font-weight:400;color:#000;white-space:pre;letter-spacing:0.9px">coefficients</div>
<div style="left:2515px;position:absolute;top:640.83px;font-family:'Liberation Serif', serif;font-size:44px;line-height:1.107421875em;font-weight:400;color:#000;white-space:pre;word-spacing:2px">[23.863 18.578]  -4288.7758258141</div>
<div style="left:2515px;position:absolute;top:694.87px;font-family:'Liberation Serif', serif;font-size:44px;line-height:1.107421875em;font-weight:400;color:#000;white-space:pre;word-spacing:2px">[23.633 33.562]  -7118.122596697286</div>
<div style="left:2515px;position:absolute;top:748.91px;font-family:'Liberation Serif', serif;font-size:44px;line-height:1.107421875em;font-weight:400;color:#000;white-space:pre;word-spacing:2px">[25.719 18.578]  343.56206470085755</div>
<div style="left:2515px;position:absolute;top:802.95px;font-family:'Liberation Serif', serif;font-size:44px;line-height:1.107421875em;font-weight:400;color:#000;white-space:pre;word-spacing:2px">[25.629 21.331]  6681.5592272897575</div>
<div style="left:2515px;position:absolute;top:856.99px;font-family:'Liberation Serif', serif;font-size:44px;line-height:1.107421875em;font-weight:400;color:#000;white-space:pre;word-spacing:2px">[25.451 30.351]  7311.688197688012</div>
<div style="left:2515px;position:absolute;top:911.03px;font-family:'Liberation Serif', serif;font-size:44px;line-height:1.107421875em;font-weight:400;color:#000;white-space:pre;word-spacing:2px">[25.431 33.562]  6238.6563864750215</div>
<div style="left:2515px;position:absolute;top:965.07px;font-family:'Liberation Serif', serif;font-size:44px;line-height:1.107421875em;font-weight:400;color:#000;white-space:pre;word-spacing:2px">[27.583 18.578]  3057.41449301643</div>
<div style="left:2515px;position:absolute;top:1019.11px;font-family:'Liberation Serif', serif;font-size:44px;line-height:1.107421875em;font-weight:400;color:#000;white-space:pre;word-spacing:2px">[27.4   24.199]  -3833.8830185925726</div>
<div style="left:2515px;position:absolute;top:1073.15px;font-family:'Liberation Serif', serif;font-size:44px;line-height:1.107421875em;font-weight:400;color:#000;white-space:pre;word-spacing:2px">[27.328 27.226]  -7643.8319895620125</div>
<div style="left:2515px;position:absolute;top:1127.19px;font-family:'Liberation Serif', serif;font-size:44px;line-height:1.107421875em;font-weight:400;color:#000;white-space:pre;word-spacing:2px">[35.08  18.578]  -3586.43858025191</div>
<div style="left:2515px;position:absolute;top:1181.23px;font-family:'Liberation Serif', serif;font-size:44px;line-height:1.107421875em;font-weight:400;color:#000;white-space:pre;word-spacing:2px">[34.7   27.226]  6948.062343284098</div>
<div style="left:2515px;position:absolute;top:1235.27px;font-family:'Liberation Serif', serif;font-size:44px;line-height:1.107421875em;font-weight:400;color:#000;white-space:pre;word-spacing:2px">[36.815 21.331]  -1824.9499649823413</div>
<div style="left:2515px;position:absolute;top:1289.31px;font-family:'Liberation Serif', serif;font-size:44px;line-height:1.107421875em;font-weight:400;color:#000;white-space:pre;word-spacing:2px">[36.341 33.562]  -9833.925077080046</div>
<div style="left:2515px;position:absolute;top:1343.35px;font-family:'Liberation Serif', serif;font-size:44px;line-height:1.107421875em;font-weight:400;color:#000;white-space:pre;word-spacing:2px">[38.844 18.578]  2734.052347942281</div>
<div style="left:2515px;position:absolute;top:1397.39px;font-family:'Liberation Serif', serif;font-size:44px;line-height:1.107421875em;font-weight:400;color:#000;white-space:pre;word-spacing:2px">[38.28  30.351]  -5185.068007416075</div>
<div style="left:2515px;position:absolute;top:1451.43px;font-family:'Liberation Serif', serif;font-size:44px;line-height:1.107421875em;font-weight:400;color:#000;white-space:pre;word-spacing:2px">[38.16  33.562]  10000.0</div>
<div style="left:2515px;position:absolute;top:1559.51px;font-family:'Liberation Serif', serif;font-size:44px;line-height:1.107421875em;font-weight:400;color:#000;white-space:pre;letter-spacing:1px;word-spacing:2px">constant bias</div>
<div style="left:2515px;position:absolute;top:1613.55px;font-family:'Liberation Serif', serif;font-size:44px;line-height:1.107421875em;font-weight:400;color:#000;white-space:pre;letter-spacing:0.5px;word-spacing:2px">b = 17.371837301718536</div>
<div style="position:absolute;left:26px;top:29px;width:3555px;height:8px;background:#aca8a8;border-radius:3px 3px 0 0"></div>
<div style="position:absolute;left:26px;top:29px;width:7px;height:2087px;background:#aca8a8"></div>
<div style="position:absolute;left:3574px;top:29px;width:7px;height:2087px;background:#aca8a8"></div>
<div style="position:absolute;left:26px;top:2109px;width:3555px;height:7px;background:#aca8a8"></div>
</body></html>
